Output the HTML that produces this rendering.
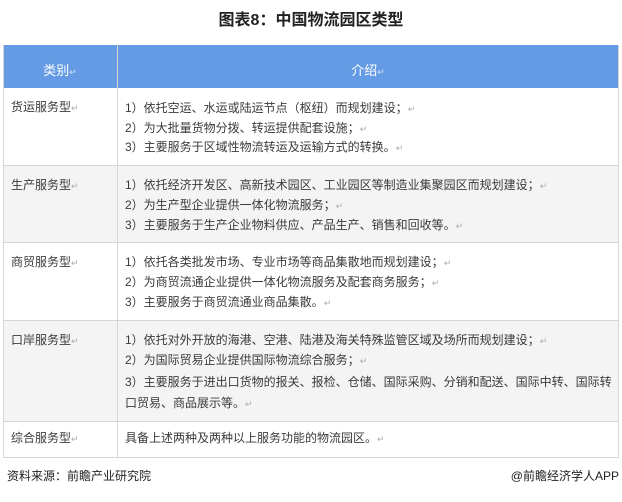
<!DOCTYPE html><html><head><meta charset="utf-8"><style>
body{margin:0;width:622px;height:502px;background:#fff;position:relative;font-family:"Liberation Sans","Noto Sans CJK SC",sans-serif;color:#3a3a3a;overflow:hidden}
.a{position:absolute;white-space:nowrap;font-size:12px;line-height:14px}
.r{position:absolute;left:3px;width:616px;border-bottom:1px solid #d6d6d6}
.m{color:#aaa;font-size:9px}
</style></head><body>
<div class="a" style="left:0;width:622px;text-align:center;top:11px;font-size:16px;line-height:20px;font-weight:bold;color:#222">图表8：中国物流园区类型</div>
<div style="position:absolute;left:3px;top:45px;width:616px;height:43px;background:#659be4"></div>
<div class="r" style="top:88px;height:77px;background:#fff"></div>
<div class="r" style="top:166px;height:76px;background:#f4f4f4"></div>
<div class="r" style="top:243px;height:77px;background:#fff"></div>
<div class="r" style="top:321px;height:100px;background:#f4f4f4"></div>
<div class="r" style="top:422px;height:35px;background:#fff"></div>
<div style="position:absolute;left:3px;top:45px;width:0;height:412px;border-left:1px solid #d6d6d6"></div>
<div style="position:absolute;left:618px;top:45px;width:0;height:412px;border-left:1px solid #d6d6d6"></div>
<div style="position:absolute;left:117px;top:45px;width:0;height:412px;border-left:1px solid #d6d6d6"></div>
<div class="a" style="left:3px;width:114px;text-align:center;top:64px;color:#fff;font-size:13px">类别<span style="color:#cfe0f8;font-size:9px">↵</span></div>
<div class="a" style="left:118px;width:500px;text-align:center;top:64px;color:#fff;font-size:13px">介绍<span style="color:#cfe0f8;font-size:9px">↵</span></div>

<div class="a" style="left:11px;top:100px">货运服务型<span class="m">↵</span></div>
<div class="a" style="left:125px;top:101px">1）依托空运、水运或陆运节点（枢纽）而规划建设；<span class="m">↵</span></div>
<div class="a" style="left:125px;top:121px">2）为大批量货物分拨、转运提供配套设施；<span class="m">↵</span></div>
<div class="a" style="left:125px;top:140px">3）主要服务于区域性物流转运及运输方式的转换。<span class="m">↵</span></div>

<div class="a" style="left:11px;top:178px">生产服务型<span class="m">↵</span></div>
<div class="a" style="left:125px;top:178px">1）依托经济开发区、高新技术园区、工业园区等制造业集聚园区而规划建设；<span class="m">↵</span></div>
<div class="a" style="left:125px;top:198px">2）为生产型企业提供一体化物流服务；<span class="m">↵</span></div>
<div class="a" style="left:125px;top:218px">3）主要服务于生产企业物料供应、产品生产、销售和回收等。<span class="m">↵</span></div>

<div class="a" style="left:11px;top:255px">商贸服务型<span class="m">↵</span></div>
<div class="a" style="left:125px;top:255px">1）依托各类批发市场、专业市场等商品集散地而规划建设；<span class="m">↵</span></div>
<div class="a" style="left:125px;top:275px">2）为商贸流通企业提供一体化物流服务及配套商务服务；<span class="m">↵</span></div>
<div class="a" style="left:125px;top:295px">3）主要服务于商贸流通业商品集散。<span class="m">↵</span></div>

<div class="a" style="left:11px;top:333px">口岸服务型<span class="m">↵</span></div>
<div class="a" style="left:125px;top:333px">1）依托对外开放的海港、空港、陆港及海关特殊监管区域及场所而规划建设；<span class="m">↵</span></div>
<div class="a" style="left:125px;top:353px">2）为国际贸易企业提供国际物流综合服务；<span class="m">↵</span></div>
<div class="a" style="left:125px;top:375px">3）主要服务于进出口货物的报关、报检、仓储、国际采购、分销和配送、国际中转、国际转</div>
<div class="a" style="left:125px;top:396px">口贸易、商品展示等。<span class="m">↵</span></div>

<div class="a" style="left:11px;top:431px">综合服务型<span class="m">↵</span></div>
<div class="a" style="left:125px;top:431px">具备上述两种及两种以上服务功能的物流园区。<span class="m">↵</span></div>

<div class="a" style="left:7px;top:469px;color:#222">资料来源：前瞻产业研究院</div>
<div class="a" style="right:3px;top:469px;color:#222">@前瞻经济学人APP</div>
</body></html>
